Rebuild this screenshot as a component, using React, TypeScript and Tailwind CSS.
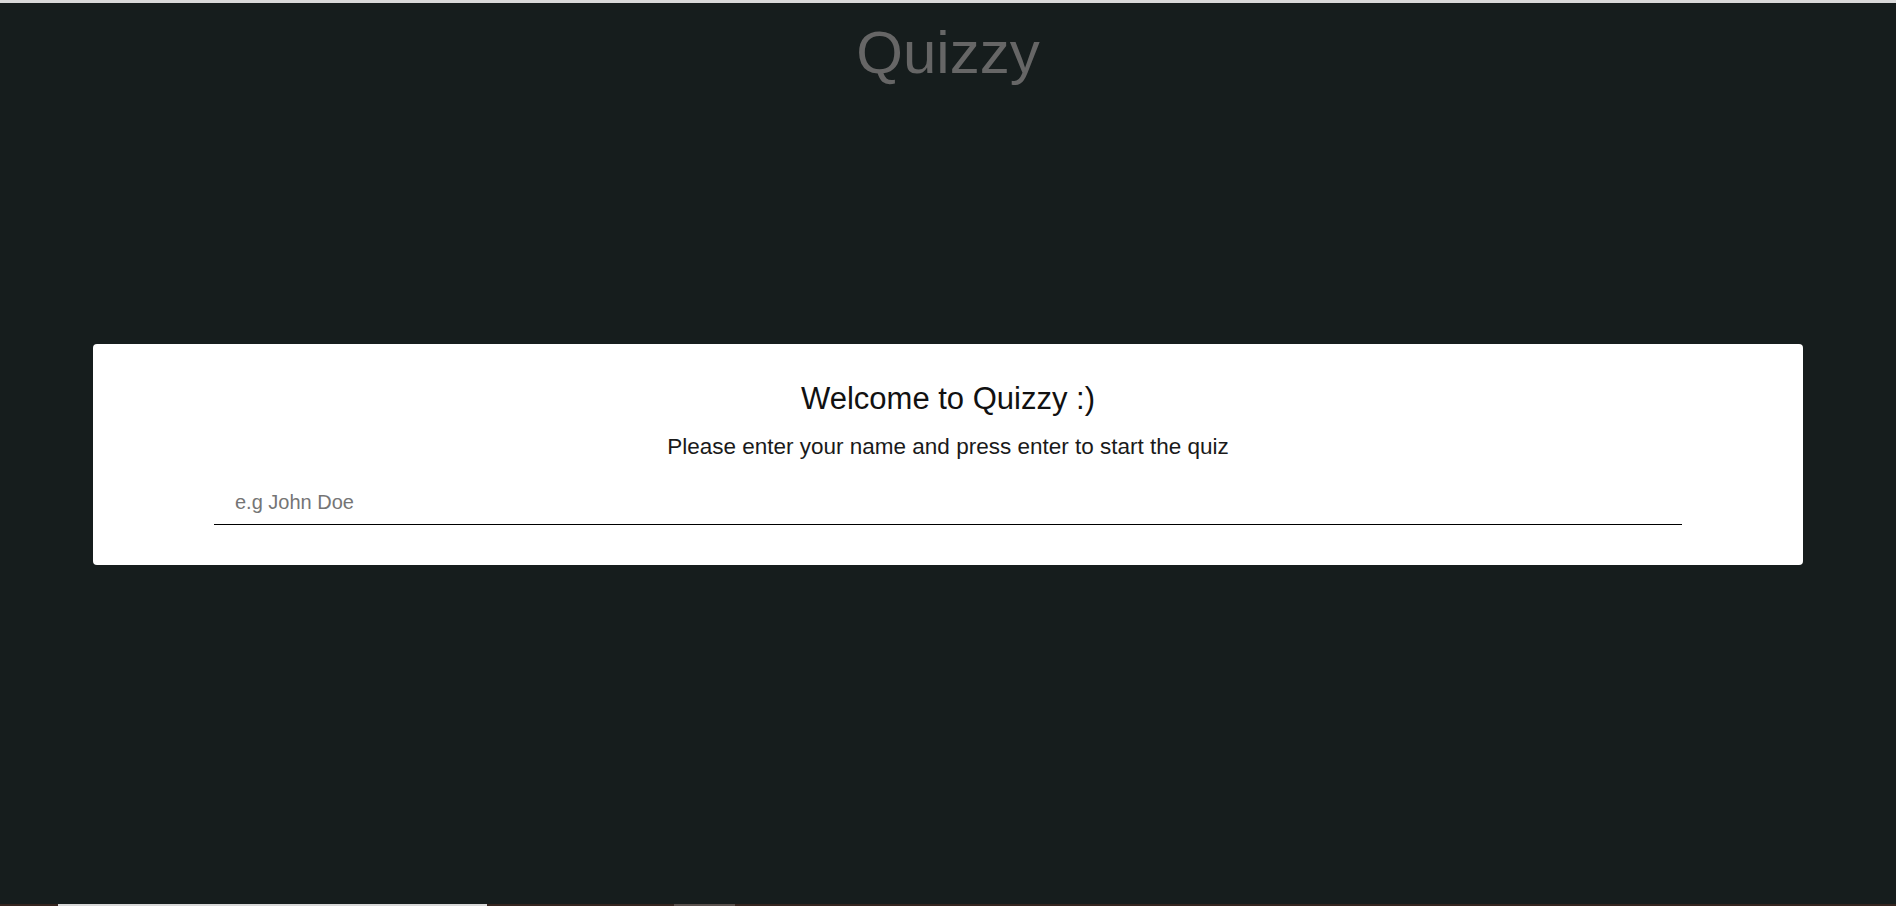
import React, { useState } from "react"

export default function App() {
    const [name, setName] = useState("")

    return (
        <div className="h-[906px] w-full flex flex-col bg-[#161d1d] font-['Liberation_Sans',Arial,sans-serif] overflow-hidden">
            <div className="h-[3px] w-full bg-[#d9d9d9]" />

            <h1 className="mt-[15px] text-center text-[60px] leading-[69px] text-[#666666]">
                Quizzy
            </h1>

            <div className="mt-[257px] mx-[93px] bg-white rounded-[4px] px-[121px] pt-[37px] pb-[40px] flex flex-col items-center">
                <h2 className="text-[31px] leading-[35.6px] text-[#111111]">Welcome to Quizzy :)</h2>
                <p className="mt-[17px] text-[22.5px] leading-[25.8px] text-[#1a1a1a]">
                    Please enter your name and press enter to start the quiz
                </p>
                <input
                    value={name}
                    onChange={(e) => setName(e.target.value)}
                    placeholder="e.g John Doe"
                    className="mt-[24px] w-full border-b border-black pt-[8px] pb-[10px] px-[21px] text-[20px] leading-[23px] text-black placeholder:text-[#757575] outline-none"
                />
            </div>

            <div className="mt-auto h-[2px] w-full flex bg-[#35251f]">
                <div className="ml-[58px] w-[429px] bg-[#d8d8d8]" />
                <div className="ml-[187px] w-[61px] bg-[#5a514d]" />
            </div>
        </div>
    )
}
